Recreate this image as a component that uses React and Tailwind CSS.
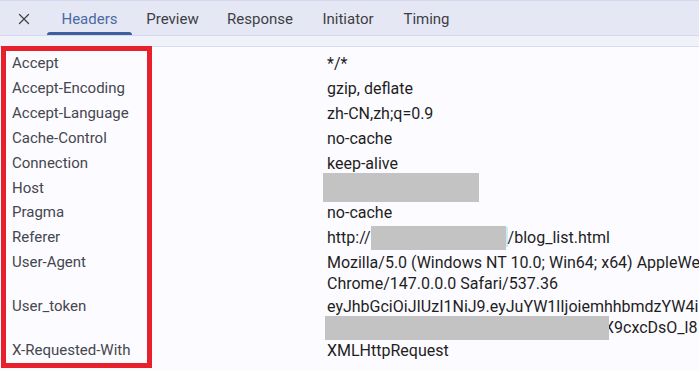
import { X } from 'lucide-react'

const tabs = [
    { name: 'Headers', w: 'w-[85px]', active: true },
    { name: 'Preview', w: 'w-[81px]' },
    { name: 'Response', w: 'w-[94px]' },
    { name: 'Initiator', w: 'w-[82px]' },
    { name: 'Timing', w: 'w-[75px]' },
]

function Redacted({ className }) {
    return <span className={`block bg-[#c3c3c3] shrink-0 ${className}`} />
}

function Row({ label, children, className = 'pt-[2px] pb-[2px]' }) {
    return (
        <div className={`flex leading-[21px] ${className}`}>
            <div className="w-[327px] pl-[12px] text-[15px] text-[#45474e] shrink-0">{label}</div>
            <div className="text-[16px] text-[#1e1e1e] whitespace-nowrap min-h-[21px]">{children}</div>
        </div>
    )
}

export default function App() {
    return (
        <div className="relative w-[699px] h-[370px] overflow-hidden bg-[#fcfbff] font-['Roboto',sans-serif] text-[15px]">
            {/* Tab bar */}
            <div className="h-[36px] flex items-stretch bg-[#e5e8f4] border-t border-b border-[#d3daf0]">
                <div className="w-[47px] flex items-center justify-center pt-[2px]">
                    <X size={18} strokeWidth={1.75} className="text-[#444]" />
                </div>
                {tabs.map((t) => (
                    <div
                        key={t.name}
                        className={`${t.w} relative flex items-center justify-center pt-[3px] ${t.active ? 'text-[#4b69a3]' : 'text-[#3d3e45]'}`}
                    >
                        {t.name}
                        {t.active && (
                            <span className="absolute left-0 right-0 bottom-0 h-[3px] rounded-t-[3px] bg-[#3d5f9d]" />
                        )}
                    </div>
                ))}
            </div>
            <div className="h-[11px] bg-[#f1f2f9] border-b border-[#d5dcf3]" />

            {/* Header rows */}
            <div className="pt-[4px]">
                <Row label="Accept">*/*</Row>
                <Row label="Accept-Encoding">gzip, deflate</Row>
                <Row label="Accept-Language">zh-CN,zh;q=0.9</Row>
                <Row label="Cache-Control">no-cache</Row>
                <Row label="Connection">keep-alive</Row>
                <Row label="Host">
                    <div className="h-[21px]">
                        <Redacted className="w-[156px] h-[29px] -ml-[4px] -mt-[5px]" />
                    </div>
                </Row>
                <Row label="Pragma" className="pt-[1px] pb-[2px]">no-cache</Row>
                <Row label="Referer">
                    <div className="flex items-start h-[21px]">
                        <span>http://</span>
                        <Redacted className="w-[135px] h-[24px] -mt-[1px]" />
                        <span className="block w-[2px] h-[20px] bg-[#c4eef5]" />
                        <span>/blog_list.html</span>
                    </div>
                </Row>
                <Row label="User-Agent" className="pt-[2px]">
                    <div>Mozilla/5.0 (Windows NT 10.0; Win64; x64) AppleWebKit/537.36 (KHTML, like Gecko)</div>
                    <div>Chrome/147.0.0.0 Safari/537.36</div>
                </Row>
                <Row label="User_token" className="pt-[2px]">
                    <div>eyJhbGciOiJIUzI1NiJ9.eyJuYW1lIjoiemhhbmdzYW4iLCJleHAiOjE3</div>
                    <div className="flex items-start h-[21px]">
                        <Redacted className="relative z-10 w-[284px] h-[24px] -ml-[2px] -mt-[1px]" />
                        <span className="-ml-[5px]">X9cxcDsO_l8</span>
                    </div>
                </Row>
                <Row label="X-Requested-With">XMLHttpRequest</Row>
            </div>

            {/* Annotation box */}
            <div className="absolute left-[1px] top-[46px] w-[151px] h-[322px] border-[5px] border-[#e8202b] pointer-events-none" />
        </div>
    )
}
